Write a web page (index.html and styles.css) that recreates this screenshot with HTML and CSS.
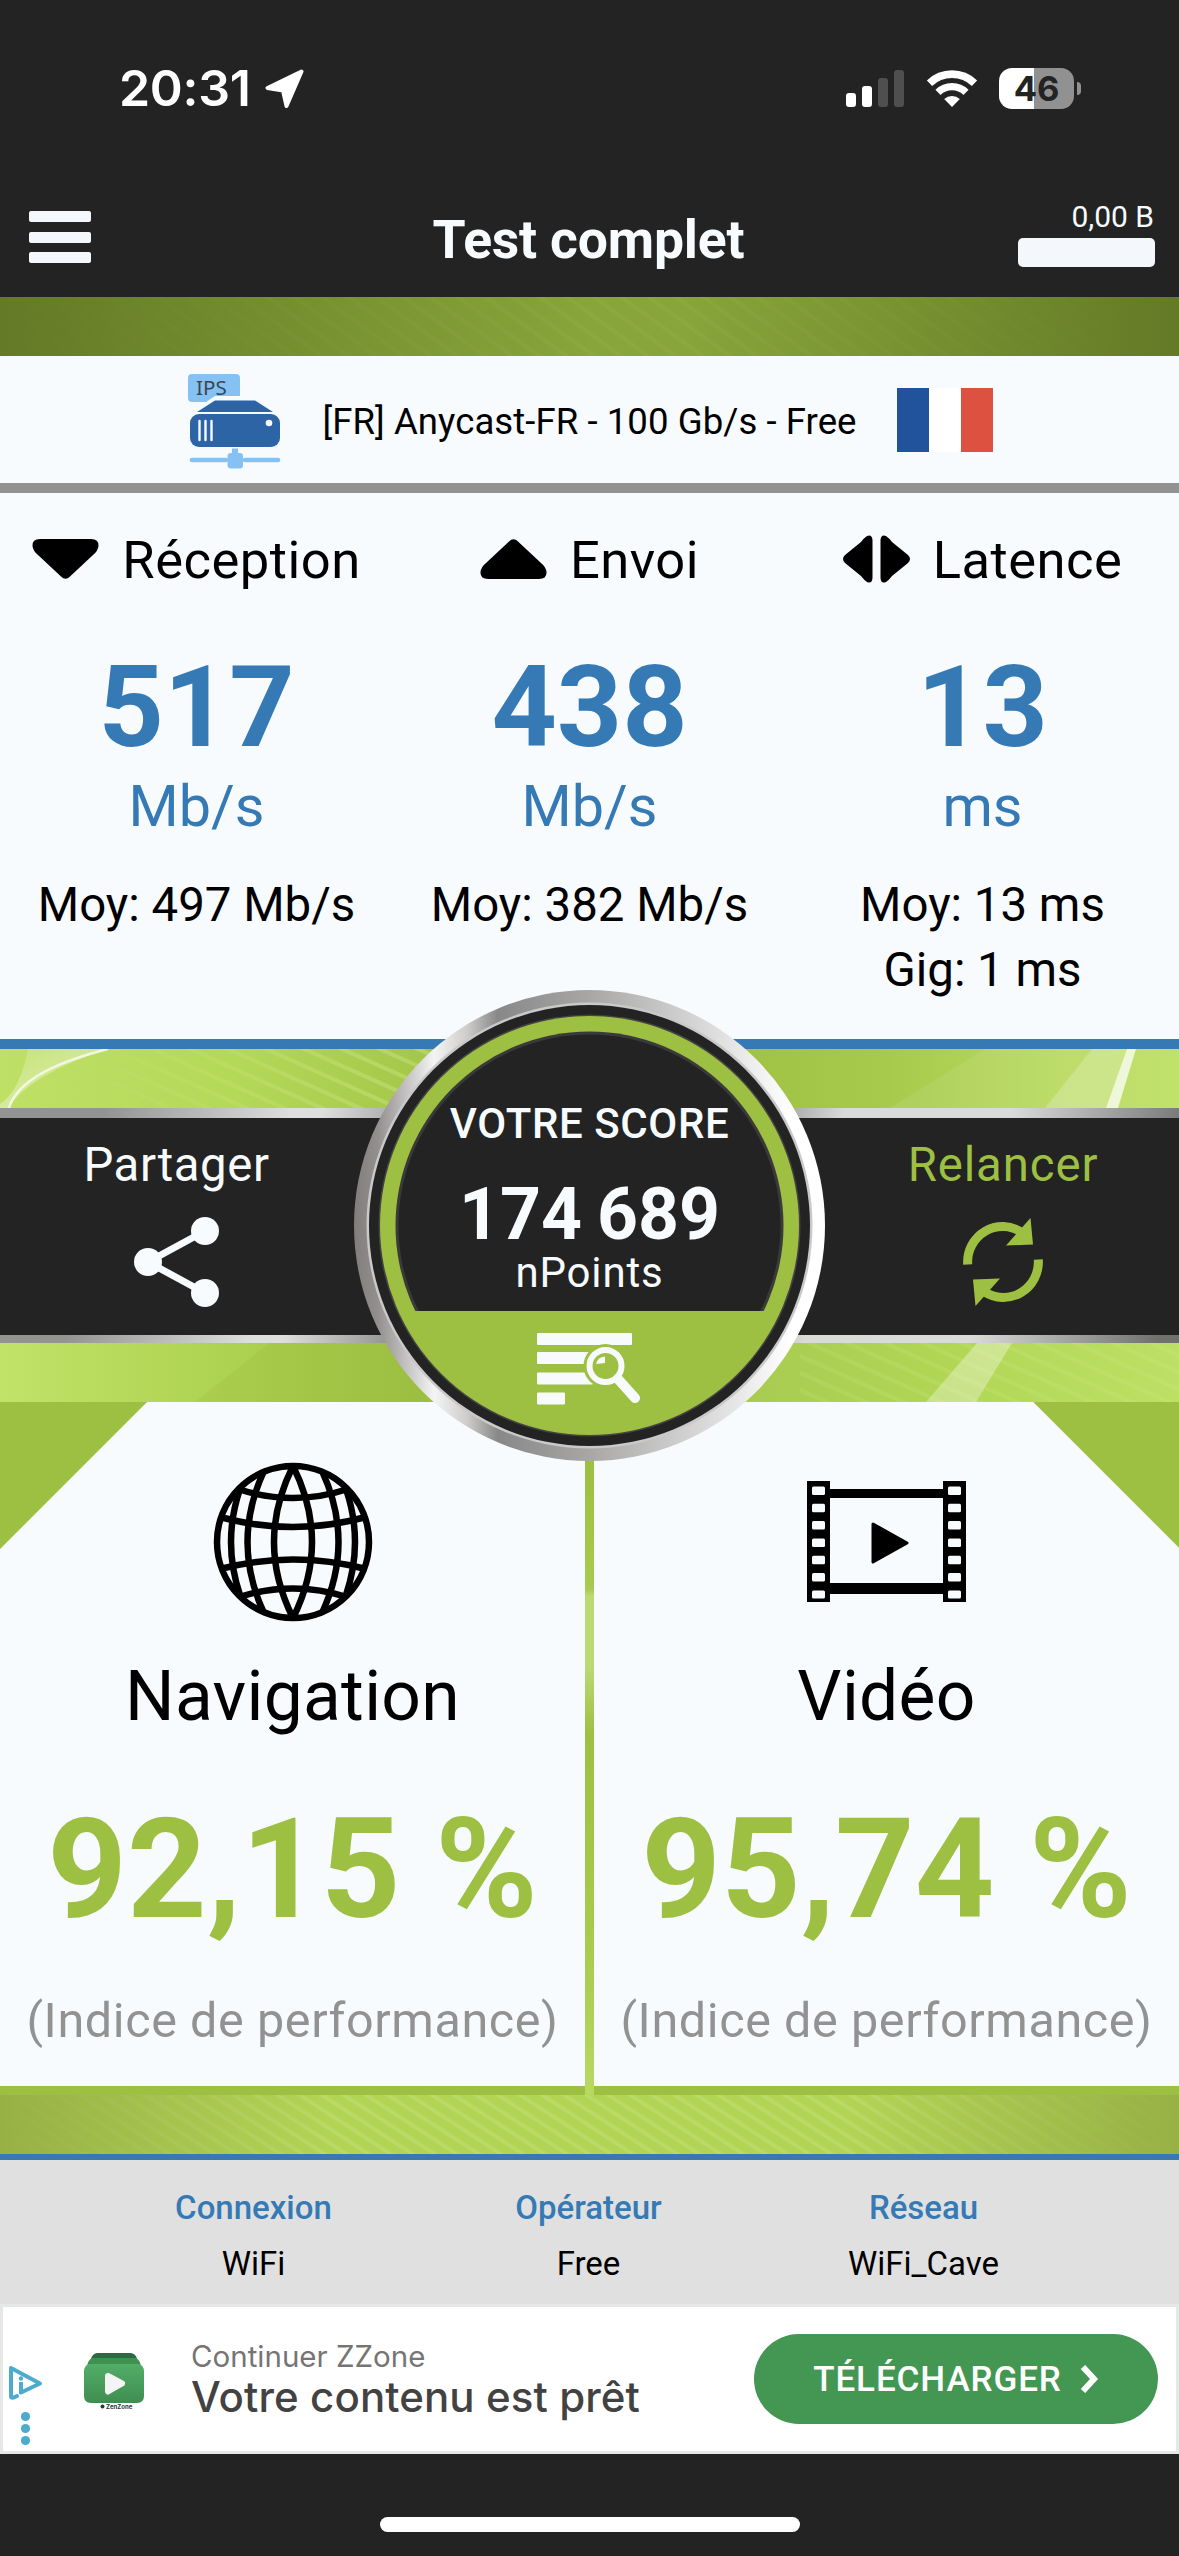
FILE: index.html
```
<!DOCTYPE html>
<html lang="fr">
<head>
    <meta charset="UTF-8">
    <meta name="viewport" content="width=device-width, initial-scale=1.0">
    <title>Test complet</title>
    <link rel="stylesheet" href="styles.css">
</head>
<body>
    <div class="status-bar">
        <span class="time">20:31</span>
        <svg class="location" width="40" height="40" viewBox="0 0 40 40">
            <path d="M36.5 2.5 L2.5 19 L18 21.5 L21.5 37 Z" fill="#fff" stroke="#fff" stroke-width="4" stroke-linejoin="round"/>
        </svg>
        <div class="status-icons">
            <svg width="58" height="38" viewBox="0 0 58 38">
                <rect x="0" y="23" width="10" height="14" rx="3" fill="#fff"/>
                <rect x="16" y="16" width="10" height="21" rx="3" fill="#fff"/>
                <rect x="32" y="8" width="10" height="29" rx="3" fill="#4f4f4f"/>
                <rect x="48" y="0" width="10" height="37" rx="3" fill="#4f4f4f"/>
            </svg>
            <svg class="wifi" width="52" height="38" viewBox="0 0 52 38">
                <path d="M3.5 13.2 A32.5 32.5 0 0 1 48.5 13.2" fill="none" stroke="#fff" stroke-width="7.6"/>
                <path d="M12 22.3 A20 20 0 0 1 40 22.3" fill="none" stroke="#fff" stroke-width="7.4"/>
                <path d="M18.2 29 A11.5 11.5 0 0 1 33.8 29 L26 37 Z" fill="#fff"/>
            </svg>
            <div class="battery"><span>46</span></div>
            <i class="battery-cap"></i>
        </div>
    </div>

    <header class="nav">
        <div class="menu"><i></i><i></i><i></i></div>
        <h1>Test complet</h1>
        <div class="usage">
            <span>0,00 B</span>
            <div class="usage-bar"></div>
        </div>
    </header>

    <div class="band band-top"></div>

    <div class="server">
        <svg width="94" height="96" viewBox="0 0 94 96">
            <path d="M4 0 H48 Q52 0 52 4 V22 H27 L18 28 H4 Q0 28 0 24 V4 Q0 0 4 0Z" fill="#85c1f3"/>
            <text x="8" y="20.5" class="ips">IPS</text>
            <path d="M27 26.500 H67 L85 38 H9 Z" fill="#2d64a6"/>
            <rect x="2" y="40" width="90" height="33" rx="9" fill="#2d64a6"/>
            <path d="M11.500 47 V66 M17.500 47 V66 M23.500 47 V66" stroke="#f7fbfe" stroke-width="2.400" stroke-linecap="round"/>
            <circle cx="81" cy="49" r="3.300" fill="#f7fbfe"/>
            <path d="M44 74.500 H50 V79 H52 Q55 79 55 82 V91 Q55 94.500 52 94.500 H43 Q39.500 94.500 39.500 91 V82 Q39.500 79 43 79 H44Z" fill="#85c1f3"/>
            <path d="M4 86 H38 M57 86 H90" stroke="#85c1f3" stroke-width="4.600" stroke-linecap="round"/>
        </svg>
        <span>[FR] Anycast-FR - 100 Gb/s - Free</span>
        <div class="flag"><i></i><i></i><i></i></div>
    </div>

    <section class="metrics">
        <div class="metric">
            <div class="metric-head">
                <svg width="67" height="50" viewBox="0 0 67 50"><path d="M8 5 H59 Q67 5 66.500 12 Q66 17 61 21 L38 42.500 Q33.500 47 29 42.500 L6 21 Q1 17 .5 12 Q0 5 8 5Z"/></svg>
                <h2>Réception</h2>
            </div>
            <div class="value">517</div>
            <div class="unit">Mb/s</div>
            <div class="detail">Moy: 497 Mb/s</div>
        </div>
        <div class="metric">
            <div class="metric-head">
                <svg width="67" height="50" viewBox="0 0 67 50"><path d="M8 45 H59 Q67 45 66.500 38 Q66 33 61 29 L38 7.500 Q33.500 3 29 7.500 L6 29 Q1 33 .5 38 Q0 45 8 45Z"/></svg>
                <h2>Envoi</h2>
            </div>
            <div class="value">438</div>
            <div class="unit">Mb/s</div>
            <div class="detail">Moy: 382 Mb/s</div>
        </div>
        <div class="metric">
            <div class="metric-head">
                <svg width="67" height="50" viewBox="0 0 67 50"><path d="M29.500 6 V44 Q29 50 24 48 Q21 46 18 42 L2 29 Q-2 25 2 21 L18 8 Q21 4 24 2 Q29 0 29.500 6Z M37.500 6 V44 Q38 50 43 48 Q46 46 49 42 L65 29 Q69 25 65 21 L49 8 Q46 4 43 2 Q38 0 37.500 6Z"/></svg>
                <h2>Latence</h2>
            </div>
            <div class="value">13</div>
            <div class="unit">ms</div>
            <div class="detail">Moy: 13 ms</div>
            <div class="detail">Gig: 1 ms</div>
        </div>
    </section>

    <section class="middle">
        <svg class="backdrop" width="1179" height="353" viewBox="0 0 1179 353">
            <defs>
                <linearGradient id="topLeft"><stop offset="0" stop-color="#bfe066"/><stop offset=".2" stop-color="#b4d858"/><stop offset=".38" stop-color="#a2c549"/><stop offset=".6" stop-color="#9ec144"/><stop offset=".75" stop-color="#a7ca4c"/><stop offset=".9" stop-color="#b8da5e"/><stop offset="1" stop-color="#bbdf5e"/></linearGradient>
                <linearGradient id="botLeft"><stop offset="0" stop-color="#c1e368"/><stop offset=".2" stop-color="#add150"/><stop offset=".36" stop-color="#9cbf42"/><stop offset=".6" stop-color="#a6c950"/><stop offset=".8" stop-color="#b1d655"/><stop offset="1" stop-color="#bde064"/></linearGradient>
                <linearGradient id="fade"><stop offset="0" stop-color="#fff" stop-opacity="0"/><stop offset=".85" stop-color="#fff"/></linearGradient>
                <linearGradient id="glare" x1="0" y1="0" x2="0" y2="1"><stop offset="0" stop-color="#fff" stop-opacity=".35"/><stop offset="1" stop-color="#fff" stop-opacity=".3"/></linearGradient>
                <linearGradient id="glow" x1="0" y1="0" x2="1" y2="1"><stop offset="0" stop-color="#fff" stop-opacity=".1"/><stop offset="1" stop-color="#fff" stop-opacity=".6"/></linearGradient>
                <pattern id="stripes" width="38" height="17" patternUnits="userSpaceOnUse"><path d="M-38 -17 L76 34 M-38 0 L38 34 M0 -17 L76 17" stroke="#d6e98d" stroke-opacity=".35" stroke-width="4"/></pattern>
                <mask id="m1"><rect x="60" width="370" height="59" fill="url(#fade)"/></mask>
            </defs>
            <rect width="1179" height="59" fill="url(#topLeft)"/>
            <rect x="60" width="370" height="59" fill="url(#stripes)" mask="url(#m1)"/>
            <path d="M28 0 H108 Q30 25 8 59 H0 V55 Q20 42 28 0Z" fill="url(#glow)"/>
            <path d="M108 0 Q20 22 9 59" fill="none" stroke="#fff" stroke-opacity=".7" stroke-width="2.5"/>
            <path d="M985 0 H1179 V59 H890Z" fill="#fff" fill-opacity=".08"/>
            <path d="M1092 0 H1127 L1106 59 H1045Z" fill="#fff" fill-opacity=".22"/>
            <path d="M1127 0 H1136 L1118 59 H1106Z" fill="#fff" fill-opacity=".75"/>
            <rect y="294" width="1179" height="59" fill="url(#botLeft)"/>
            <path d="M270 294 H460 V353 H195Z" fill="#9abd40" fill-opacity=".25"/>
            <rect x="800" y="294" width="379" height="59" fill="url(#stripes)" opacity=".45"/>
            <path d="M977 294 H1012 L976 353 H926Z" fill="url(#glare)"/>
        </svg>
        <div class="actions">
            <div class="action share">
                <span>Partager</span>
                <svg width="85" height="90" viewBox="0 0 85 90" fill="#f7fbfe">
                    <path d="M71 14 L14 45 L71 76" fill="none" stroke="#f7fbfe" stroke-width="7"/>
                    <circle cx="71" cy="14" r="14"/><circle cx="14" cy="45" r="14"/><circle cx="71" cy="76" r="14"/>
                </svg>
            </div>
            <div class="action restart">
                <span>Relancer</span>
                <svg width="80" height="90" viewBox="0 0 80 90">
                    <path d="M4.700 47.500 A35 35.500 0 0 1 59 15.500" fill="none" stroke="#9dbf42" stroke-width="9"/>
                    <path d="M67.500 1 L70 27.500 L43 28.500Z" fill="#9dbf42"/>
                    <path d="M75.300 42.500 A35 35.500 0 0 1 21 74.500" fill="none" stroke="#9dbf42" stroke-width="9"/>
                    <path d="M12.500 89 L10 62.500 L37 61.500Z" fill="#9dbf42"/>
                </svg>
            </div>
        </div>
        <div class="score">
            <svg class="dial" width="471" height="471" viewBox="0 0 471 471">
                <defs>
                    <linearGradient id="metal">
                        <stop offset="0" stop-color="#807d7b"/><stop offset=".05" stop-color="#928f8e"/><stop offset=".17" stop-color="#f4f4f4"/><stop offset=".24" stop-color="#cfcdcb"/><stop offset=".305" stop-color="#888"/><stop offset=".5" stop-color="#a8a7a6"/><stop offset=".75" stop-color="#dadada"/><stop offset=".93" stop-color="#fff"/><stop offset="1" stop-color="#fff"/>
                    </linearGradient>
                    <clipPath id="lower"><rect y="321" width="471" height="150"/></clipPath>
                </defs>
                <circle cx="235.500" cy="235.500" r="235.500" fill="url(#metal)"/>
                <circle cx="235.500" cy="235.500" r="223" fill="#c9c9c9"/>
                <circle cx="235.500" cy="235.500" r="220.500" fill="#232323"/>
                <circle cx="235.500" cy="235.500" r="211" fill="#444"/>
                <circle cx="235.500" cy="235.500" r="209.500" fill="#9dbf42"/>
                <circle cx="235.500" cy="235.500" r="194" fill="#3a3a3a"/>
                <circle cx="235.500" cy="235.500" r="191" fill="#232323"/>
                <circle cx="235.500" cy="235.500" r="200" fill="#9dbf42" clip-path="url(#lower)"/>
            </svg>
            <span class="score-title">VOTRE SCORE</span>
            <span class="score-value">174 689</span>
            <span class="score-unit">nPoints</span>
            <svg class="score-details" width="104" height="74" viewBox="0 0 104 74" fill="#f7fbfe">
                <rect x="0" y="0" width="95" height="12" rx="1"/>
                <rect x="0" y="19" width="56" height="12" rx="1"/>
                <rect x="0" y="39.500" width="56" height="12" rx="1"/>
                <rect x="0" y="59.500" width="28" height="12" rx="1"/>
                <circle cx="68.500" cy="33" r="22" fill="#9dbf42"/>
                <circle cx="68.500" cy="33" r="16" fill="none" stroke="#f7fbfe" stroke-width="6"/>
                <path d="M81 46 L98 65" stroke="#f7fbfe" stroke-width="10" stroke-linecap="round"/>
                <path d="M59 31 A10 10 0 0 1 68 23.500 V30 Z"/>
            </svg>
        </div>
    </section>

    <section class="panels">
        <div class="panel panel-left">
            <svg class="panel-icon" width="160" height="160" viewBox="-80 -80 160 160" fill="none" stroke="#000" stroke-width="6.500">
                <circle r="76"/>
                <path d="M0 -76 Q-38 0 0 76 M0 -76 Q38 0 0 76"/>
                <path d="M-29 -71 Q-62 0 -29 71 M29 -71 Q62 0 29 71"/>
                <path d="M-53 -53 Q-71 0 -53 53 M53 -53 Q71 0 53 53"/>
                <path d="M-55 -53 Q0 -35 55 -53 M-73 -25 Q0 -5 73 -25 M-73 27 Q0 8 73 27 M-54 55 Q0 38 54 55"/>
            </svg>
            <h2>Navigation</h2>
            <div class="percent">92,15 %</div>
            <div class="caption">(Indice de performance)</div>
        </div>
        <div class="panel panel-right">
            <svg class="panel-icon" width="160" height="160" viewBox="0 0 160 160">
                <path d="M0 19 H23 V27 H136 V19 H159 V140 H136 V132 H23 V140 H0Z M23 36 V121 H136 V36Z" fill-rule="evenodd"/>
                <g fill="#f7fbfe">
                    <rect x="5" y="24.500" width="13" height="8.500" rx="1.500"/><rect x="141" y="24.500" width="13" height="8.500" rx="1.500"/>
                    <rect x="5" y="41.800" width="13" height="8.500" rx="1.500"/><rect x="141" y="41.800" width="13" height="8.500" rx="1.500"/>
                    <rect x="5" y="59.100" width="13" height="8.500" rx="1.500"/><rect x="141" y="59.100" width="13" height="8.500" rx="1.500"/>
                    <rect x="5" y="76.500" width="13" height="8.500" rx="1.500"/><rect x="141" y="76.500" width="13" height="8.500" rx="1.500"/>
                    <rect x="5" y="93.800" width="13" height="8.500" rx="1.500"/><rect x="141" y="93.800" width="13" height="8.500" rx="1.500"/>
                    <rect x="5" y="111.100" width="13" height="8.500" rx="1.500"/><rect x="141" y="111.100" width="13" height="8.500" rx="1.500"/>
                    <rect x="5" y="128.400" width="13" height="8" rx="1.500"/><rect x="141" y="128.400" width="13" height="8" rx="1.500"/>
                </g>
                <path d="M66 62 L100 81 L66 100Z" stroke="#000" stroke-width="3" stroke-linejoin="round"/>
            </svg>
            <h2>Vidéo</h2>
            <div class="percent">95,74 %</div>
            <div class="caption">(Indice de performance)</div>
        </div>
    </section>

    <div class="band band-bottom"></div>

    <section class="network">
        <div><b>Connexion</b><span>WiFi</span></div>
        <div><b>Opérateur</b><span>Free</span></div>
        <div><b>Réseau</b><span>WiFi_Cave</span></div>
    </section>

    <div class="ad">
        <svg class="ad-choices" width="36" height="82" viewBox="0 0 36 82" fill="none" stroke="#4dabcd">
            <path d="M13 27.500 L32 18.500 L3 3 V31 Q3 34.500 9 31" stroke-width="4" stroke-linejoin="round" stroke-linecap="round"/>
            <path d="M13 17 V29" stroke-width="4"/>
            <circle cx="13" cy="13.500" r="2.200" fill="#4dabcd" stroke="none"/>
            <g fill="#4dabcd" stroke="none"><circle cx="17.500" cy="51.500" r="4.600"/><circle cx="17.500" cy="63.500" r="4.600"/><circle cx="17.500" cy="75.500" r="4.600"/></g>
        </svg>
        <svg class="ad-logo" width="60" height="58" viewBox="0 0 60 58">
            <defs><linearGradient id="box" x1="0" y1="0" x2="0" y2="1"><stop offset="0" stop-color="#52ad68"/><stop offset="1" stop-color="#3f8e50"/></linearGradient></defs>
            <path d="M13 0 H47 Q52 1 53 6 H7 Q8 1 13 0Z" fill="#2b6a43"/>
            <path d="M8 5 H52 Q56 7 57 13 H3 Q4 7 8 5Z" fill="#40914f"/>
            <path d="M5 11 H55 Q60 13 60 18 V43 Q60 50 53 50 H7 Q0 50 0 43 V18 Q0 13 5 11Z" fill="url(#box)"/>
            <path d="M24 23 L38 30.500 L24 38.500Z" fill="#f4f4f4" stroke="#f4f4f4" stroke-width="6" stroke-linejoin="round"/>
            <circle cx="18.500" cy="53.500" r="2" fill="#333"/>
            <text x="22" y="55.500" class="ad-brand">ZenZone</text>
        </svg>
        <div class="ad-text">
            <span>Continuer ZZone</span>
            <strong>Votre contenu est prêt</strong>
        </div>
        <div class="ad-button">
            <span>TÉLÉCHARGER</span>
            <svg width="19" height="28" viewBox="0 0 19 28"><path d="M3 2 L14 14 L3 26" fill="none" stroke="#fff" stroke-width="6"/></svg>
        </div>
    </div>

    <footer class="home-area"><div class="home-indicator"></div></footer>
</body>
</html>
```
FILE: styles.css
```
* {
    margin: 0;
    padding: 0;
    box-sizing: border-box;
}

body {
    width: 1179px;
    height: 2556px;
    overflow: hidden;
    font-family: Roboto, "Liberation Sans", sans-serif;
    background: #a9cd4f;
    color: #000;
    white-space: nowrap;
}

svg {
    display: block;
    flex: none;
}

h1, h2 {
    font-weight: 400;
}

/* Status bar */
.status-bar {
    height: 177px;
    padding: 0 98px 0 119px;
    background: #232323;
    color: #fff;
    display: flex;
    align-items: center;
    font-family: Inter, sans-serif;
}

.time {
    width: 135px;
    font-size: 50px;
    font-weight: 600;
    letter-spacing: -0.3px;
    line-height: 60px;
    margin-top: -2px;
}

.location {
    margin-left: 11px;
}

.status-icons {
    margin-left: auto;
    display: flex;
    align-items: center;
}

.wifi {
    margin: 0 21px 0 22px;
}

.battery {
    width: 75px;
    height: 41px;
    border-radius: 13px;
    background: linear-gradient(90deg, #fff 35px, #919191 35px);
    color: #232323;
    font-size: 34.5px;
    font-weight: 700;
    line-height: 41px;
    text-align: center;
}

.battery-cap {
    width: 4px;
    height: 13px;
    margin-left: 3px;
    border-radius: 0 6px 6px 0;
    background: #919191;
}

/* Header */
.nav {
    height: 120px;
    padding: 0 24px 0 29px;
    background: #232323;
    color: #f7fbfe;
    display: grid;
    grid-template-columns: 130px 1fr 137px;
    align-items: center;
}

.menu {
    width: 62px;
    display: grid;
    gap: 9.5px;
}

.menu i {
    height: 11px;
    border-radius: 2px;
    background: #f4f8fc;
}

.nav h1 {
    padding-top: 5px;
    text-align: center;
    font-size: 53.5px;
    font-weight: 700;
    letter-spacing: -0.2px;
}

.usage {
    padding-top: 1px;
    text-align: right;
    font-size: 30px;
    line-height: 40px;
}

.usage span {
    display: block;
    padding-right: 1px;
}

.usage-bar {
    height: 29px;
    margin: 1px 0 11px;
    border-radius: 5px;
    background: #f4f8fc;
}

/* Textured green strips */
.band {
    height: 59px;
}

.band-top {
    background:
        linear-gradient(90deg, #647a26 0, rgba(100, 122, 38, 0) 50%, rgba(100, 122, 38, 0) 58%, #647a26 100%),
        repeating-linear-gradient(36deg, #87a53a 0 10px, #8ca83f 12px 14px, #87a53a 16px);
}

.band-bottom {
    background:
        linear-gradient(90deg, #97b145 0, rgba(150, 178, 68, 0) 28%, rgba(150, 178, 68, 0) 72%, #97b145 100%),
        repeating-linear-gradient(33deg, #b2d455 0 6px, #bcda67 8px 9px, #b2d455 12px);
}

/* Selected server */
.server {
    height: 137px;
    padding: 4px 0 0 2px;
    border-bottom: 10px solid #929292;
    background: #f7fbfe;
    display: flex;
    align-items: center;
    justify-content: center;
    gap: 40px;
    font-size: 36.6px;
    letter-spacing: 0.05px;
}

.ips {
    font: 20.5px "Noto Sans", sans-serif;
    fill: #3b4650;
}

.flag {
    width: 96px;
    height: 64px;
    margin-bottom: 4px;
    display: grid;
    grid-template-columns: repeat(3, 1fr);
}

.flag i:nth-child(1) { background: #21529c; }
.flag i:nth-child(2) { background: #fff; }
.flag i:nth-child(3) { background: #dd5140; }

/* Speed results */
.metrics {
    height: 556px;
    padding-top: 33px;
    border-bottom: 10px solid #357ab5;
    background: #f7fbfe;
    display: grid;
    grid-template-columns: repeat(3, 1fr);
    text-align: center;
}

.metric-head {
    height: 66px;
    display: flex;
    align-items: center;
    justify-content: center;
    gap: 23px;
}

.metric-head h2 {
    padding-top: 2px;
    font-size: 52.5px;
    line-height: 66px;
    letter-spacing: 0.5px;
}

.value {
    margin-top: 57px;
    color: #357ab5;
    font-size: 114px;
    font-weight: 700;
    line-height: 116px;
}

.unit {
    color: #357ab5;
    font-size: 57.5px;
    line-height: 84px;
    margin-bottom: 24px;
}

.detail {
    font-size: 47.4px;
    line-height: 65px;
}

/* Score and actions */
.middle {
    position: relative;
    height: 353px;
    padding-top: 59px;
}

.backdrop {
    position: absolute;
    top: 0;
    left: 0;
}

.actions {
    position: relative;
    height: 235px;
    display: flex;
    justify-content: space-between;
}

.action {
    width: 480px;
    padding-top: 16px;
    border-style: solid;
    border-width: 10px 0 8px;
    background: #232323;
    color: #f7fbfe;
    font-size: 47.3px;
    line-height: 62px;
    letter-spacing: 0.6px;
    display: flex;
    flex-direction: column;
    align-items: center;
    gap: 21px;
}

.share {
    padding-right: 127px;
    border-image: linear-gradient(100deg, #939393 20%, #dedede 56%, #dedede 62%, #969696 82%) 10 0 8;
}

.restart {
    padding-left: 128px;
    color: #9dbf42;
    letter-spacing: 0.9px;
    border-image: linear-gradient(100deg, #888 10%, #dadada 28%, #dadada 60%, #707070 96%) 10 0 8;
}

.score {
    position: absolute;
    top: -59px;
    left: 354px;
    z-index: 1;
    width: 471px;
    height: 471px;
    padding-top: 109px;
    color: #f7fbfe;
    display: flex;
    flex-direction: column;
    align-items: center;
}

.dial {
    position: absolute;
    inset: 0;
    z-index: -1;
}

.score-title {
    font-size: 42px;
    font-weight: 500;
    line-height: 50px;
    letter-spacing: 0.6px;
}

.score-value {
    margin-top: 26px;
    font-size: 71.5px;
    font-weight: 700;
    line-height: 80px;
    word-spacing: -3px;
}

.score-unit {
    font-size: 42px;
    line-height: 36px;
    letter-spacing: 0.8px;
}

.score-details {
    margin: 42px 2px 0 0;
}

/* Performance panels */
.panels {
    height: 693px;
    display: grid;
    grid-template-columns: 1fr 1fr;
    gap: 9px;
    background: linear-gradient(#9dbf42 0 10%, #a9ca50 27%, #bcda74 28% 38%, #9dbf42 48%, #a9cb50 80%, #b8d862);
}

.panel {
    padding-top: 60px;
    border-bottom: 9px solid #9dbf42;
    text-align: center;
}

.panel-left {
    background: linear-gradient(135deg, #9dbf42 103.500px, #f7fbfe 104.500px);
}

.panel-right {
    background: linear-gradient(225deg, #9dbf42 102.500px, #f7fbfe 103.500px);
}

.panel-icon {
    margin: 0 auto;
}

.panel h2 {
    margin-top: 35px;
    font-size: 69.5px;
    line-height: 80px;
    letter-spacing: 0.3px;
}

.percent {
    margin-top: 62px;
    color: #9dbf42;
    font-size: 139px;
    font-weight: 700;
    line-height: 142px;
}

.caption {
    margin-top: 50px;
    color: #929292;
    font-size: 48.5px;
    line-height: 60px;
    letter-spacing: 0.6px;
}

/* Network info */
.network {
    height: 150px;
    padding: 25px 88px 0 86px;
    border-top: 6px solid #357ab5;
    background: #e0e0e0;
    display: grid;
    grid-template-columns: repeat(3, 1fr);
    text-align: center;
    font-size: 33px;
    line-height: 46px;
}

.network b {
    display: block;
    margin-bottom: 10px;
    color: #357ab5;
    font-weight: 500;
}

/* Ad banner */
.ad {
    height: 150px;
    padding: 0 18px 0 5px;
    border: 3px solid #e6e7e7;
    background: #fff;
    display: flex;
    align-items: center;
}

.ad-choices {
    margin-top: 54px;
}

.ad-logo {
    margin: 6px 47px 0 40px;
}

.ad-brand {
    font: 700 6px Inter, sans-serif;
    fill: #333;
}

.ad-text {
    display: flex;
    flex-direction: column;
    margin-top: -5px;
    font-family: Inter, sans-serif;
}

.ad-text span {
    color: #757575;
    font-size: 29.5px;
    line-height: 40px;
}

.ad-text strong {
    color: #424242;
    font-size: 42px;
    font-weight: 500;
    line-height: 42px;
    letter-spacing: 0.1px;
}

.ad-button {
    width: 404px;
    height: 90px;
    margin-left: auto;
    border-radius: 45px;
    background: #439753;
    color: #fff;
    font-size: 35px;
    font-weight: 500;
    letter-spacing: 0.9px;
    display: flex;
    align-items: center;
    justify-content: center;
    gap: 18px;
}

.home-area {
    height: 102px;
    padding-top: 63px;
    background: #232323;
}

.home-indicator {
    width: 420px;
    height: 15px;
    margin: 0 auto;
    border-radius: 8px;
    background: #fff;
}
```
